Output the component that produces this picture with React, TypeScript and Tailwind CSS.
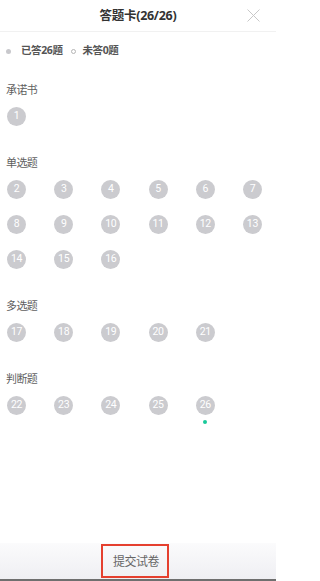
import React from 'react';

const FONT = "font-['Noto_Sans','Noto_Sans_CJK_SC',sans-serif]";

type Section = { title: string; nums: number[] };

const sections: Section[] = [
  { title: '承诺书', nums: [1] },
  { title: '单选题', nums: [2, 3, 4, 5, 6, 7, 8, 9, 10, 11, 12, 13, 14, 15, 16] },
  { title: '多选题', nums: [17, 18, 19, 20, 21] },
  { title: '判断题', nums: [22, 23, 24, 25, 26] },
];

const CURRENT = 26;

const Bubble: React.FC<{ n: number }> = ({ n }) => (
  <div className="h-[35px] flex flex-col items-center">
    <div className="w-[19px] h-[19px] rounded-full bg-[#cbcbcf] flex items-center justify-center text-white text-[10.5px] leading-none tracking-[-0.3px] font-['Roboto','Liberation_Sans',sans-serif]">
      {n}
    </div>
    {n === CURRENT && <div className="mt-[5px] w-[4px] h-[4px] rounded-full bg-[#19c99a]" />}
  </div>
);

const App: React.FC = () => {
  return (
    <div className={`w-[276px] h-[581px] bg-white flex flex-col overflow-hidden ${FONT}`}>
      {/* header */}
      <div className="h-[32px] shrink-0 grid grid-cols-[1fr_auto_1fr] items-center border-b border-[#f1f1f1]">
        <div />
        <h1 className="text-[12.5px] font-bold text-[#333] leading-none tracking-[-0.3px] mt-[1px]">答题卡(26/26)</h1>
        <div className="flex justify-end pr-[16px]">
          <svg width="13" height="13" viewBox="0 0 13 13" fill="none" stroke="#c8c8c8" strokeWidth="1">
            <path d="M0.5 0.5 L12.5 12.5 M12.5 0.5 L0.5 12.5" />
          </svg>
        </div>
      </div>

      {/* legend */}
      <div className="h-[38px] shrink-0 flex items-center pl-[6px] text-[10.5px] font-bold text-[#555] tracking-[-0.4px]">
        <span className="w-[5px] h-[5px] rounded-full bg-[#c8c8cc]" />
        <span className="ml-[10px]">已答26题</span>
        <span className="ml-[8px] w-[5px] h-[5px] rounded-full border border-[#b5b5b5]" />
        <span className="ml-[7px]">未答0题</span>
      </div>

      {/* question groups */}
      <div className="flex-1 flex flex-col gap-[12px] pt-[11px]">
        {sections.map((s) => (
          <div key={s.title} className="flex flex-col">
            <div className="h-[18px] pl-[6px] text-[11px] leading-[18px] tracking-[-0.6px] text-[#5f5f5f]">{s.title}</div>
            <div className="mt-[8px] pl-[7px] grid grid-cols-[repeat(6,19px)] gap-x-[28.2px]">
              {s.nums.map((n) => (
                <Bubble key={n} n={n} />
              ))}
            </div>
          </div>
        ))}
      </div>

      {/* footer */}
      <div className="h-[38px] shrink-0 bg-gradient-to-b from-[#fbfbfc] to-[#efeff3] border-b-2 border-[#6f6f6f] flex justify-center items-start">
        <div className="mt-[1px] ml-[-6px] w-[68px] h-[34px] border-2 border-[#e5402f] flex items-center justify-center pt-[2px] pl-[2px]">
          <span className="text-[12px] tracking-[-0.5px] text-[#666]">提交试卷</span>
        </div>
      </div>
    </div>
  );
};

export default App;
